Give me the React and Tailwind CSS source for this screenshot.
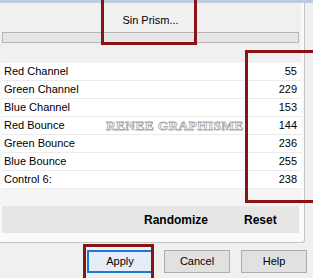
const rows = [
  ["Red Channel", 55],
  ["Green Channel", 229],
  ["Blue Channel", 153],
  ["Red Bounce", 144],
  ["Green Bounce", 236],
  ["Blue Bounce", 255],
  ["Control 6:", 238],
];

const Btn = ({ label, active }) => (
  <div
    className={
      "w-[66px] h-[23px] flex items-center justify-center text-[11px] text-black bg-[#e1e1e1] " +
      (active ? "border-2 border-[#1a7ad4] bg-[#e5eef8]" : "border border-[#adadad]")
    }
  >
    {label}
  </div>
);

export default function App() {
  return (
    <div
      className="relative w-[313px] h-[278px] overflow-hidden bg-[#f0f0f0] text-black"
      style={{ fontFamily: '"Liberation Sans", Arial, sans-serif' }}
    >
      <div className="h-[3px] bg-[#bccbdd]" />

      <div className="w-[305px] bg-[#fafafa] border-r border-b border-[#c4c4c4] rounded-br-[3px] pr-[3px]">
        {/* preset header */}
        <div className="h-[60px] bg-[#f0f0f0]">
          <div className="h-[29px] pt-[6px] flex items-center justify-center text-[11px]">
            Sin Prism...
          </div>
          <div className="mx-[2px] h-[11px] bg-[#e6e6e6] border border-[#b4b4b4]" />
        </div>

        {/* sliders list */}
        <div className="relative ml-[2px]">
          {rows.map(([name, value]) => (
            <div
              key={name}
              className="h-[18px] flex items-center justify-between pl-[2px] pr-[4px] bg-white border-b border-[#ebebeb] text-[11px]"
            >
              <span>{name}</span>
              <span>{value}</span>
            </div>
          ))}
          <div
            className="absolute left-[104px] top-[53px] text-[13.5px] font-bold tracking-[0.3px] text-[#f8f8f8] [-webkit-text-stroke:0.8px_#a9a9a9]"
            style={{ fontFamily: '"Liberation Serif", "Times New Roman", serif' }}
          >
            RENEE GRAPHISME
          </div>
        </div>

        <div className="h-[17px] bg-[#f4f4f4]" />

        {/* action bar */}
        <div className="mx-[2px] h-[27px] bg-[#e6e6e6] flex items-center text-[12px] font-bold">
          <span className="ml-[142px]">Randomize</span>
          <span className="ml-[36px]">Reset</span>
        </div>
        <div className="h-[9px]" />
      </div>

      {/* dialog buttons */}
      <div className="flex justify-end gap-[11px] pr-[6px] pt-[7px]">
        <Btn label="Apply" active />
        <Btn label="Cancel" />
        <Btn label="Help" />
      </div>

      {/* tutorial highlight boxes */}
      <div className="absolute left-[101px] top-[-3px] w-[96px] h-[48px] border-[3px] border-[#8a1313]" />
      <div className="absolute left-[245px] top-[50px] w-[80px] h-[153px] border-[3px] border-[#8a1313]" />
      <div className="absolute left-[83px] top-[244px] w-[71px] h-[40px] border-[3px] border-[#8a1313]" />
    </div>
  );
}
